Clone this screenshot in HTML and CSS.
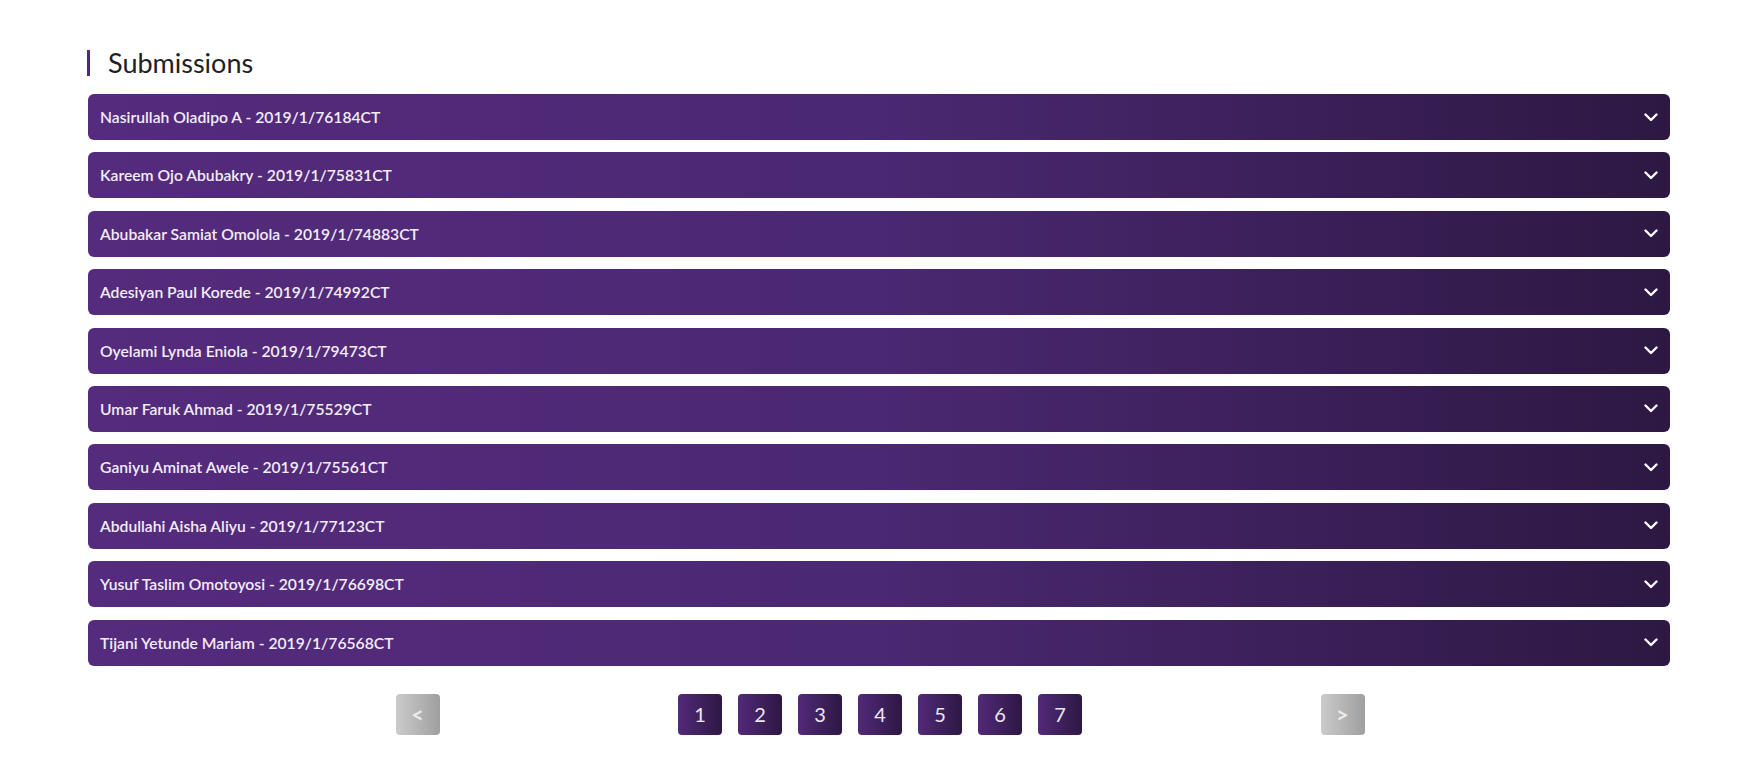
FILE: index.html
```html
<!DOCTYPE html>
<html lang="en">
<head>
    <meta charset="UTF-8">
    <meta name="viewport" content="width=device-width, initial-scale=1.0">
    <title>Submissions</title>
    <link rel="stylesheet" href="styles.css">
</head>
<body>
    <div class="container">
        <h2 class="section-title">Submissions</h2>

        <div class="submissions">
            <div class="submission">
                <span>Nasirullah Oladipo A - 2019/1/76184CT</span>
                <svg class="chevron" viewBox="0 0 14 9"><path d="M1.5 1.5 L7 7 L12.5 1.5"/></svg>
            </div>
            <div class="submission">
                <span>Kareem Ojo Abubakry - 2019/1/75831CT</span>
                <svg class="chevron" viewBox="0 0 14 9"><path d="M1.5 1.5 L7 7 L12.5 1.5"/></svg>
            </div>
            <div class="submission">
                <span>Abubakar Samiat Omolola - 2019/1/74883CT</span>
                <svg class="chevron" viewBox="0 0 14 9"><path d="M1.5 1.5 L7 7 L12.5 1.5"/></svg>
            </div>
            <div class="submission">
                <span>Adesiyan Paul Korede - 2019/1/74992CT</span>
                <svg class="chevron" viewBox="0 0 14 9"><path d="M1.5 1.5 L7 7 L12.5 1.5"/></svg>
            </div>
            <div class="submission">
                <span>Oyelami Lynda Eniola - 2019/1/79473CT</span>
                <svg class="chevron" viewBox="0 0 14 9"><path d="M1.5 1.5 L7 7 L12.5 1.5"/></svg>
            </div>
            <div class="submission">
                <span>Umar Faruk Ahmad - 2019/1/75529CT</span>
                <svg class="chevron" viewBox="0 0 14 9"><path d="M1.5 1.5 L7 7 L12.5 1.5"/></svg>
            </div>
            <div class="submission">
                <span>Ganiyu Aminat Awele - 2019/1/75561CT</span>
                <svg class="chevron" viewBox="0 0 14 9"><path d="M1.5 1.5 L7 7 L12.5 1.5"/></svg>
            </div>
            <div class="submission">
                <span>Abdullahi Aisha Aliyu - 2019/1/77123CT</span>
                <svg class="chevron" viewBox="0 0 14 9"><path d="M1.5 1.5 L7 7 L12.5 1.5"/></svg>
            </div>
            <div class="submission">
                <span>Yusuf Taslim Omotoyosi - 2019/1/76698CT</span>
                <svg class="chevron" viewBox="0 0 14 9"><path d="M1.5 1.5 L7 7 L12.5 1.5"/></svg>
            </div>
            <div class="submission">
                <span>Tijani Yetunde Mariam - 2019/1/76568CT</span>
                <svg class="chevron" viewBox="0 0 14 9"><path d="M1.5 1.5 L7 7 L12.5 1.5"/></svg>
            </div>
        </div>

        <div class="pagination">
            <button class="page-btn nav" disabled>&lt;</button>
            <div class="pages">
                <button class="page-btn">1</button>
                <button class="page-btn">2</button>
                <button class="page-btn">3</button>
                <button class="page-btn">4</button>
                <button class="page-btn">5</button>
                <button class="page-btn">6</button>
                <button class="page-btn">7</button>
            </div>
            <button class="page-btn nav" disabled>&gt;</button>
        </div>
    </div>
</body>
</html>
```

FILE: styles.css
```css
body {
    font-family: Lato, "Open Sans", sans-serif;
    margin: 0;
    padding: 0;
    background-color: #ffffff;
}

.container {
    margin: 0 84px 0 88px;
    padding-top: 50px;
}

.section-title {
    margin: 0 0 18px -1px;
    padding-left: 18px;
    border-left: 3px solid #4e2a74;
    font-size: 27px;
    font-weight: 400;
    line-height: 26px;
    color: #1e1e24;
}

.submissions {
    display: flex;
    flex-direction: column;
    gap: 12.4px;
}

.submission {
    display: flex;
    align-items: center;
    justify-content: space-between;
    height: 46px;
    padding: 0 12px;
    border-radius: 6px;
    background: linear-gradient(to right, #552b7d 0%, #4b2872 50%, #2d1843 100%);
    color: #f1ecf6;
    font-size: 15.7px;
    font-weight: 600;
    cursor: pointer;
}

.chevron {
    width: 14px;
    height: 9px;
    fill: none;
    stroke: #ffffff;
    stroke-width: 2.4;
    stroke-linecap: round;
    stroke-linejoin: round;
}

.pagination {
    display: flex;
    justify-content: space-between;
    align-items: center;
    width: 969px;
    margin: 28px auto 0;
    transform: translateX(1px);
}

.pages {
    display: flex;
    gap: 16px;
}

.page-btn {
    width: 44px;
    height: 41px;
    border: none;
    border-radius: 4px;
    background: linear-gradient(to right, #52297a, #2d1843);
    color: #ece6f2;
    font-family: Lato, "Open Sans", sans-serif;
    font-size: 20px;
    padding: 0;
    cursor: pointer;
}

.page-btn.nav {
    background: linear-gradient(to right, #cbcbcb, #9f9f9f);
    color: #ececec;
    font-size: 22px;
    font-weight: 700;
    cursor: default;
}
```
